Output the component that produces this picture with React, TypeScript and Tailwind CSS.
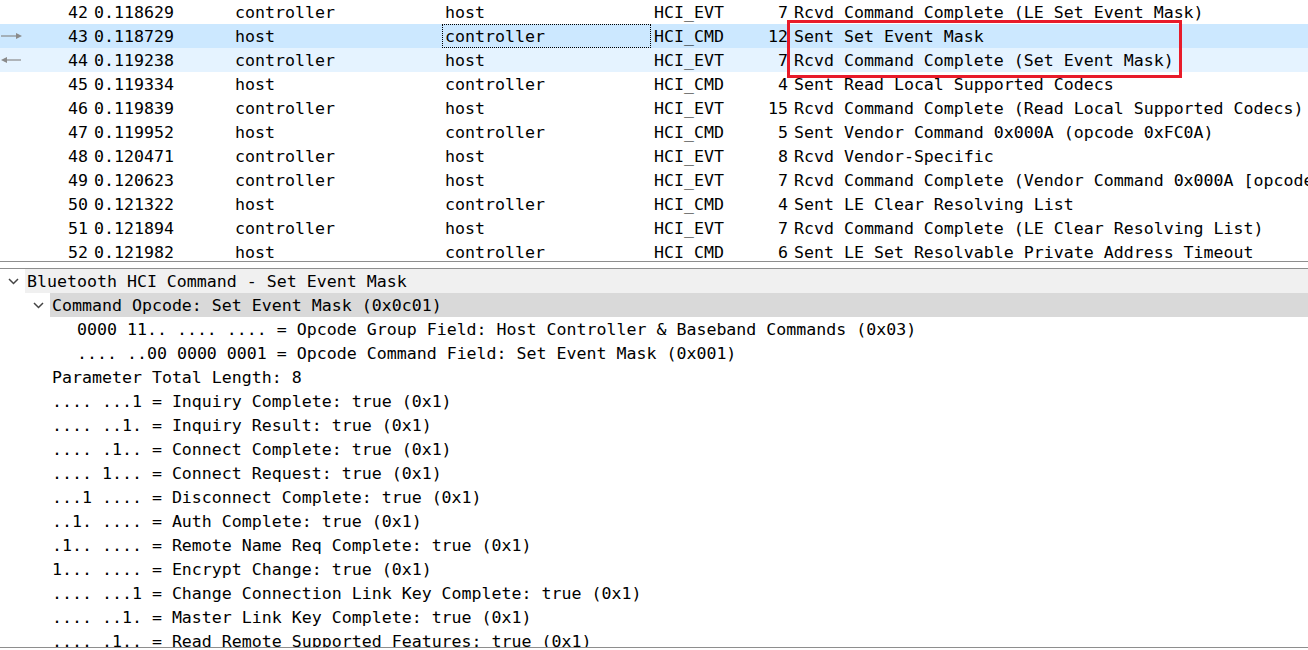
import React from "react";

type Packet = {
  no: number;
  time: string;
  src: string;
  dst: string;
  proto: string;
  len: number;
  info: string;
};

const packets: Packet[] = [
  { no: 42, time: "0.118629", src: "controller", dst: "host", proto: "HCI_EVT", len: 7, info: "Rcvd Command Complete (LE Set Event Mask)" },
  { no: 43, time: "0.118729", src: "host", dst: "controller", proto: "HCI_CMD", len: 12, info: "Sent Set Event Mask" },
  { no: 44, time: "0.119238", src: "controller", dst: "host", proto: "HCI_EVT", len: 7, info: "Rcvd Command Complete (Set Event Mask)" },
  { no: 45, time: "0.119334", src: "host", dst: "controller", proto: "HCI_CMD", len: 4, info: "Sent Read Local Supported Codecs" },
  { no: 46, time: "0.119839", src: "controller", dst: "host", proto: "HCI_EVT", len: 15, info: "Rcvd Command Complete (Read Local Supported Codecs)" },
  { no: 47, time: "0.119952", src: "host", dst: "controller", proto: "HCI_CMD", len: 5, info: "Sent Vendor Command 0x000A (opcode 0xFC0A)" },
  { no: 48, time: "0.120471", src: "controller", dst: "host", proto: "HCI_EVT", len: 8, info: "Rcvd Vendor-Specific" },
  { no: 49, time: "0.120623", src: "controller", dst: "host", proto: "HCI_EVT", len: 7, info: "Rcvd Command Complete (Vendor Command 0x000A [opcode 0xFC0A])" },
  { no: 50, time: "0.121322", src: "host", dst: "controller", proto: "HCI_CMD", len: 4, info: "Sent LE Clear Resolving List" },
  { no: 51, time: "0.121894", src: "controller", dst: "host", proto: "HCI_EVT", len: 7, info: "Rcvd Command Complete (LE Clear Resolving List)" },
  { no: 52, time: "0.121982", src: "host", dst: "controller", proto: "HCI_CMD", len: 6, info: "Sent LE Set Resolvable Private Address Timeout" },
];

type Field = { level: number; text: string; open?: boolean; bg?: string };

const fields: Field[] = [
  { level: 0, text: "Bluetooth HCI Command - Set Event Mask", open: true, bg: "bg-[#f0f0f0]" },
  { level: 1, text: "Command Opcode: Set Event Mask (0x0c01)", open: true, bg: "bg-[#d9d9d9]" },
  { level: 2, text: "0000 11.. .... .... = Opcode Group Field: Host Controller & Baseband Commands (0x03)" },
  { level: 2, text: ".... ..00 0000 0001 = Opcode Command Field: Set Event Mask (0x001)" },
  { level: 1, text: "Parameter Total Length: 8" },
  { level: 1, text: ".... ...1 = Inquiry Complete: true (0x1)" },
  { level: 1, text: ".... ..1. = Inquiry Result: true (0x1)" },
  { level: 1, text: ".... .1.. = Connect Complete: true (0x1)" },
  { level: 1, text: ".... 1... = Connect Request: true (0x1)" },
  { level: 1, text: "...1 .... = Disconnect Complete: true (0x1)" },
  { level: 1, text: "..1. .... = Auth Complete: true (0x1)" },
  { level: 1, text: ".1.. .... = Remote Name Req Complete: true (0x1)" },
  { level: 1, text: "1... .... = Encrypt Change: true (0x1)" },
  { level: 1, text: ".... ...1 = Change Connection Link Key Complete: true (0x1)" },
  { level: 1, text: ".... ..1. = Master Link Key Complete: true (0x1)" },
  { level: 1, text: ".... .1.. = Read Remote Supported Features: true (0x1)" },
];

function Arrow({ dir }: { dir: "right" | "left" }) {
  return (
    <svg width="24" height="8" viewBox="0 0 24 8" className="shrink-0">
      {dir === "right" ? (
        <>
          <line x1="1" y1="4" x2="17" y2="4" stroke="#8a8a8a" strokeWidth="1.2" />
          <path d="M16 1 L22 4 L16 7 Z" fill="#8a8a8a" />
        </>
      ) : (
        <>
          <line x1="6" y1="4" x2="21" y2="4" stroke="#8a8a8a" strokeWidth="1.2" />
          <path d="M7 1 L1 4 L7 7 Z" fill="#8a8a8a" />
        </>
      )}
    </svg>
  );
}

function Chevron() {
  return (
    <svg width="11" height="7" viewBox="0 0 11 7">
      <path d="M1 1 L5.5 5.5 L10 1" fill="none" stroke="#444" strokeWidth="1.5" />
    </svg>
  );
}

export default function App() {
  return (
    <div
      className="w-[1308px] h-[650px] overflow-hidden bg-white text-black text-[16.6px] leading-6"
      style={{ fontFamily: '"DejaVu Sans Mono", monospace' }}
    >
      {/* packet list */}
      <div className="relative h-[261px] overflow-hidden">
        {packets.map((p) => {
          const bg = p.no === 43 ? "bg-[#cce8ff]" : p.no === 44 ? "bg-[#e5f3ff]" : "bg-white";
          return (
            <div key={p.no} className={`flex h-6 pt-px whitespace-nowrap ${bg}`}>
              <div className="w-[91px] shrink-0 flex items-center justify-between pr-[3px]">
                <div className="w-6 -mt-px">
                  {p.no === 43 && <Arrow dir="right" />}
                  {p.no === 44 && <Arrow dir="left" />}
                </div>
                <span>{p.no}</span>
              </div>
              <div className="w-[141px] shrink-0 pl-[3px]">{p.time}</div>
              <div className="w-[210px] shrink-0 pl-[3px]">{p.src}</div>
              <div
                className={`w-[209px] h-6 -mt-px shrink-0 pl-[2px] border border-dotted ${
                  p.no === 43 ? "border-black" : "border-transparent"
                } leading-[23px]`}
              >
                {p.dst}
              </div>
              <div className="w-[80px] shrink-0 pl-[3px]">{p.proto}</div>
              <div className="w-[60px] shrink-0 pr-[3px] text-right">{p.len}</div>
              <div className="flex-1 pl-[3px] overflow-hidden">{p.info}</div>
            </div>
          );
        })}
        <div className="absolute left-[787px] top-[20px] w-[395px] h-[58px] border-[3px] border-[#e81b2a]" />
      </div>

      {/* splitter */}
      <div className="h-px bg-[#8e8e8e]" />
      <div className="h-[6px] bg-white" />
      <div className="h-px bg-[#8e8e8e]" />

      {/* packet details */}
      <div className="h-[378px] overflow-hidden">
        {fields.map((f, i) => (
          <div key={i} className="flex h-6 whitespace-nowrap">
            <div style={{ width: f.level * 25 }} className="shrink-0" />
            <div className="w-[25px] shrink-0 flex items-center justify-center pl-[2px]">
              {f.open && <Chevron />}
            </div>
            <div className={`flex-1 pl-[2px] pt-px ${f.bg ?? ""}`}>{f.text}</div>
          </div>
        ))}
      </div>
      <div className="h-px bg-[#8e8e8e]" />
    </div>
  );
}
